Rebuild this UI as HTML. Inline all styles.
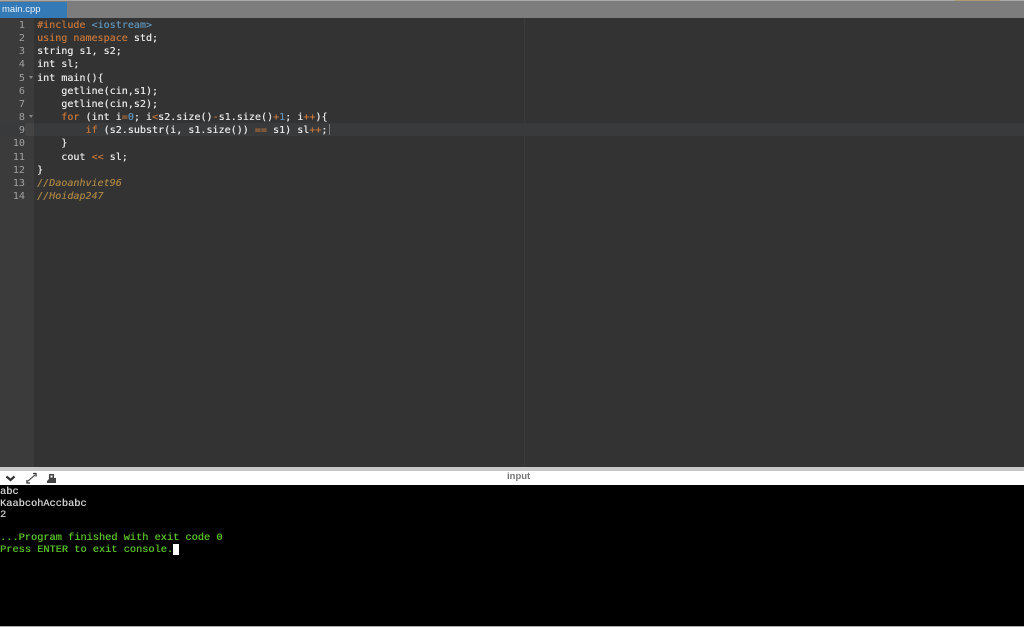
<!DOCTYPE html>
<html><head><meta charset="utf-8"><style>
html,body{margin:0;padding:0;background:#000}
#r{position:relative;width:1024px;height:627px;overflow:hidden;background:#000;font-family:"Liberation Sans",sans-serif}
#r div{position:absolute}
.top{left:0;top:0;width:1024px;height:18px;background:#7d7d7d;border-top:1px solid #a8a8a8;box-sizing:border-box}
.tab{left:0;top:2px;width:67px;height:16px;background:#337ab7;color:#e8f0f8;font-size:9.5px;line-height:15px;padding-left:2px;box-sizing:border-box}
.hint{left:955px;top:0;width:45px;height:1px;background:#b09a70}
.ed{left:0;top:18px;width:1024px;height:449px;background:#333}
.gut{left:0;top:18px;width:34px;height:449px;background:#3b3b3b}
.al{left:0;top:123px;width:1024px;height:13px;background:#383a3c}
.pm{left:524px;top:18px;width:1px;height:449px;background:#3a3a3a}
.n{left:0;width:25px;text-align:right;color:#a0a0a0;font:10.1px/13.15px "DejaVu Sans Mono",monospace;filter:blur(.3px)}
.c{left:37px;white-space:pre;color:#e8e8e8;font:10.05px/13.15px "DejaVu Sans Mono",monospace;filter:blur(.3px);text-shadow:.2px 0 0 currentColor}
.k{color:#c4753a}.b{color:#5f93b8}.o{color:#c4753a}.m{font-style:italic;color:#a98445}
.bar{left:0;top:467px;width:1024px;height:4px;background:#c8c8c8}
.hd{left:0;top:471px;width:1024px;height:14px;background:#fff}
.inp{left:507px;top:471px;color:#777;font:bold 9.5px/12px "Liberation Sans",sans-serif}
.t{left:0;white-space:pre;font:10.3px/11.6px "Liberation Mono",monospace;color:#d0d0d0;filter:blur(.3px);text-shadow:.3px 0 0 currentColor}
.g{color:#58c025}
.cur{left:173px;top:544px;width:6px;height:11px;background:#fff}
.btm{left:0;top:626px;width:1024px;height:1px;background:#aaa}
</style></head><body><div id="r">
<div class="top"></div><div class="tab">main.cpp</div><div class="hint"></div>
<div class="ed"></div><div class="gut"></div><div class="pm"></div><div class="al"></div>
<div style="left:25px;top:123px;width:9px;height:13px;background:#444"></div>
<div class="n" style="top:19px">1<br>2<br>3<br>4<br>5<br>6<br>7<br>8<br>9<br>10<br>11<br>12<br>13<br>14</div>
<div class="c" style="top:19px"><span class="k">#include</span> <span class="b">&lt;iostream&gt;</span>
<span class="k">using namespace</span> std;
string s1, s2;
int sl;
int main(){
    getline(cin,s1);
    getline(cin,s2);
    <span class="k">for</span> (int i<span class="o">=</span><span class="b">0</span>; i<span class="o">&lt;</span>s2.size()<span class="o">-</span>s1.size()<span class="o">+</span><span class="b">1</span>; i<span class="o">++</span>){
        <span class="k">if</span> (s2.substr(i, s1.size()) <span class="o">==</span> s1) sl<span class="o">++</span>;
    }
    cout <span class="o">&lt;&lt;</span> sl;
}
<span class="m">//Daoanhviet96</span>
<span class="m">//Hoidap247</span></div>
<div style="left:29px;top:76px;width:0;height:0;border:2px solid transparent;border-top:3px solid #888"></div>
<div style="left:29px;top:115px;width:0;height:0;border:2px solid transparent;border-top:3px solid #888"></div>
<div style="left:329px;top:124px;width:1px;height:11px;background:#7a7a7a"></div>
<div class="bar"></div><div class="hd"></div>
<svg style="position:absolute;left:0;top:471px" width="60" height="14" viewBox="0 0 60 14">
<path d="M6.500 5.500L10.500 9L14.500 5.500" fill="none" stroke="#333" stroke-width="2.200"/>
<path d="M28 10L35 4" stroke="#555" stroke-width="1.200"/><path d="M27 9v3h3M33 2.500h3v3" fill="none" stroke="#333" stroke-width="1.300"/>
<path d="M49 3h5v4h2v5h-9v-2l2-2z" fill="#444"/><path d="M50.500 4.500h2v2h-2z" fill="#fff"/>
</svg>
<div class="inp">input</div>
<div class="t" style="top:487px">abc
KaabcohAccbabc
2

<span class="g">...Program finished with exit code 0
Press ENTER to exit console.</span></div>
<div class="cur"></div><div class="btm"></div>
</div></body></html>
